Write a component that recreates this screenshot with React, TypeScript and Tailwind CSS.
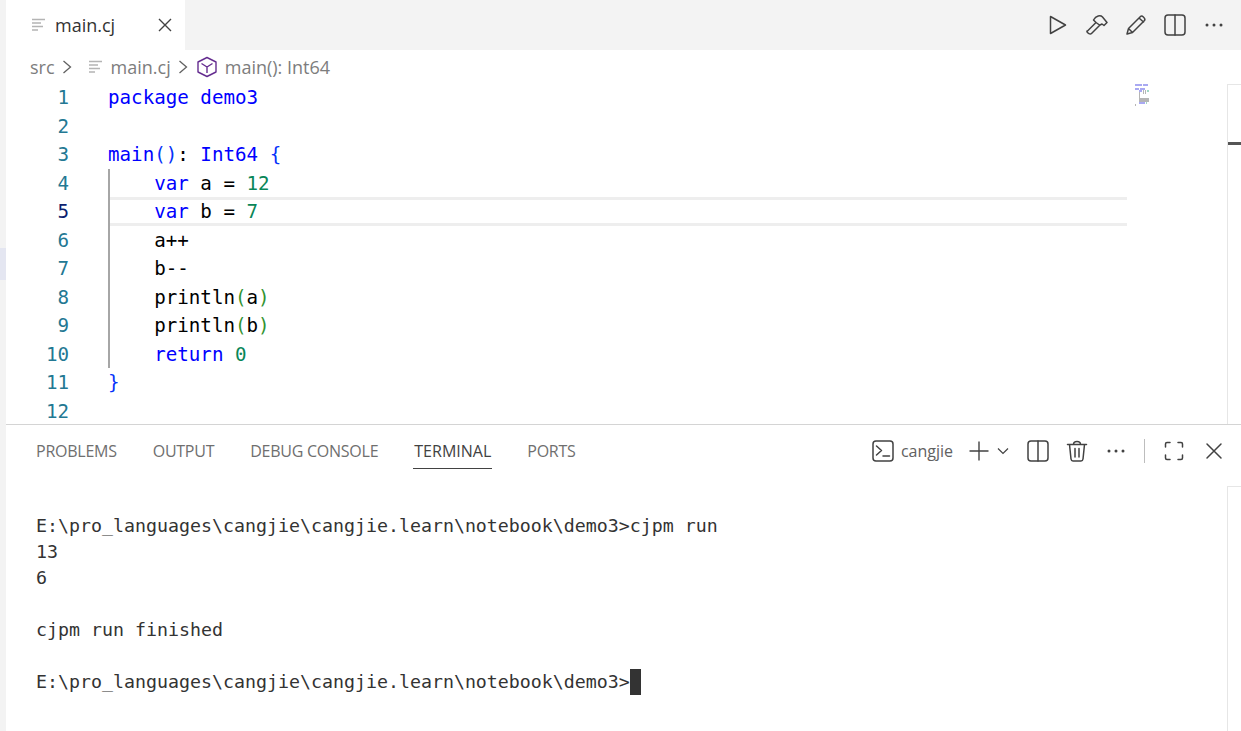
import React from "react";

const mono = "font-['DejaVu_Sans_Mono',monospace]";
const ui = "font-['Open_Sans',sans-serif]";

const K = ({ children }: { children: React.ReactNode }) => <span className="text-[#0000ff]">{children}</span>;
const N = ({ children }: { children: React.ReactNode }) => <span className="text-[#098658]">{children}</span>;
const G = ({ children }: { children: React.ReactNode }) => <span className="text-[#319331]">{children}</span>;
const B = ({ children }: { children: React.ReactNode }) => <span className="text-[#0431fa]">{children}</span>;

const codeLines: React.ReactNode[] = [
  <><K>package</K> <K>demo3</K></>,
  "",
  <><K>main</K><B>()</B>: <K>Int64</K> <B>{"{"}</B></>,
  <>    <K>var</K> a = <N>12</N></>,
  <>    <K>var</K> b = <N>7</N></>,
  <>    a++</>,
  <>    b--</>,
  <>    println<G>(</G>a<G>)</G></>,
  <>    println<G>(</G>b<G>)</G></>,
  <>    <K>return</K> <N>0</N></>,
  <B>{"}"}</B>,
  "",
];

const FileLines = () => (
  <svg width="14" height="16" viewBox="0 0 14 16" fill="none" stroke="#b4b4b4" strokeWidth="1.4">
    <path d="M0 2.5h13M0 6h9M0 9.5h11M0 13h6" />
  </svg>
);

const Chevron = () => (
  <svg width="10" height="16" viewBox="0 0 10 16" fill="none" stroke="#616161" strokeWidth="1.3">
    <path d="M1.5 2l7 6-7 6" />
  </svg>
);

const Ico = ({ children, w = 22 }: { children: React.ReactNode; w?: number }) => (
  <svg width={w} height={22} viewBox="0 0 22 22" fill="none" stroke="#424242" strokeWidth="1.5" strokeLinejoin="round" strokeLinecap="round">
    {children}
  </svg>
);

const Dots = () => (
  <Ico>
    <g fill="#424242" stroke="none">
      <circle cx="4" cy="11" r="1.5" />
      <circle cx="11" cy="11" r="1.5" />
      <circle cx="18" cy="11" r="1.5" />
    </g>
  </Ico>
);

const Split = () => (
  <Ico>
    <rect x="1" y="1" width="20" height="20" rx="3" />
    <path d="M11 1v20" />
  </Ico>
);

const Minimap = () => (
  <svg width="16" height="22" viewBox="0 0 16 22" shapeRendering="crispEdges">
    <g fill="#a9a9f2">
      <rect x="1" y="0" width="7" height="2" />
      <rect x="9" y="0" width="5" height="2" />
      <rect x="1" y="4" width="4" height="2" />
      <rect x="6" y="4" width="5" height="2" />
      <rect x="5" y="6" width="3" height="2" />
      <rect x="5" y="18" width="6" height="2" />
    </g>
    <g fill="#b5b5b5">
      <rect x="9" y="6" width="1" height="4" />
      <rect x="11" y="6" width="1" height="4" />
      <rect x="5" y="8" width="1" height="6" />
      <rect x="5" y="14" width="10" height="4" />
      <rect x="1" y="20" width="1" height="2" />
    </g>
    <rect x="13" y="6" width="2" height="2" fill="#9fd8c5" />
    <rect x="12" y="18" width="1" height="2" fill="#9fd8c5" />
  </svg>
);

const PanelTab = ({ label, active }: { label: string; active?: boolean }) => (
  <div className={`relative flex h-full items-center text-[16px] ${active ? "tracking-[0px] text-[#424242]" : "tracking-[-0.25px] text-[#6f6f6f]"}`}>
    {label}
    {active && <div className="absolute -left-px -right-px bottom-[8px] h-px bg-[#424242]" />}
  </div>
);

export default function App() {
  return (
    <div className={`flex h-[731px] w-[1241px] overflow-hidden bg-white ${ui}`}>
      <div className="flex w-[6px] shrink-0 flex-col bg-[#f3f3f3]">
        <div className="mt-[248px] h-[32px] bg-[#e4e6f1]" />
      </div>
      <div className="flex min-w-0 flex-1 flex-col">
        {/* tab bar */}
        <div className="flex h-[50px] shrink-0 bg-[#f3f3f3]">
          <div className="flex w-[179px] items-center bg-white pl-[26px]">
            <FileLines />
            <span className="ml-[9px] text-[18px] text-[#333333]">main.cj</span>
            <svg className="ml-[42px]" width="16" height="16" viewBox="0 0 16 16" fill="none" stroke="#424242" strokeWidth="1.4">
              <path d="M2 2l12 12M14 2L2 14" />
            </svg>
          </div>
          <div className="flex flex-1 items-center justify-end gap-[17px] pr-[16px]">
            <Ico>
              <path d="M3.500 2.500v17l15-8.500z" />
            </Ico>
            <Ico>
              <path d="M1 17.500L10 8.500 7.500 6C10 1.500 14.500 1 16.500 3l4.500 5.500-3 3-2-1.500-2 1-8.500 8.500c-1.500 1.500-5 -1-4.500-2.500zM10 8.500l3.500 2.500" />
            </Ico>
            <Ico>
              <path d="M2 20l1.500-5.500L15.500 2.500c1.500-1.500 5.500 2 4 4L7.500 18.500zM3.500 14.500l4 4M14 4l4.500 4" />
            </Ico>
            <Split />
            <Dots />
          </div>
        </div>

        {/* breadcrumb */}
        <div className="flex h-[34px] shrink-0 items-center pl-[24px] text-[18px] text-[#7d7d7d]">
          <span>src</span>
          <span className="ml-[7px]"><Chevron /></span>
          <span className="ml-[17px]"><FileLines /></span>
          <span className="ml-[8px]">main.cj</span>
          <span className="ml-[7px]"><Chevron /></span>
          <svg className="ml-[8px]" width="22" height="22" viewBox="0 0 22 22" fill="none" stroke="#652d90" strokeWidth="1.4" strokeLinejoin="round">
            <path d="M11 1.500l9 4.500v10l-9 4.500-9-4.500V6zM5.500 7.500L11 11l5.500-3.500M11 11v6" />
          </svg>
          <span className="ml-[7px]">main(): Int64</span>
        </div>

        {/* editor */}
        <div className="relative flex h-[340px] shrink-0 overflow-hidden">
          <div className={`w-[63px] shrink-0 text-right text-[19.18px] leading-[28.5px] text-[#237893] ${mono}`}>
            {codeLines.map((_, i) => (
              <div key={i} className={i === 4 ? "text-[#0b216f]" : ""}>{i + 1}</div>
            ))}
          </div>
          <div className={`ml-[39px] text-[19.18px] leading-[28.5px] whitespace-pre text-black ${mono}`}>
            {codeLines.map((line, i) => (
              <div key={i} className="h-[28.5px]">{line}</div>
            ))}
          </div>
          {/* indent guide */}
          <div className="absolute left-[102px] top-[85px] h-[199px] w-[2px] bg-[#a6a6a6]" />
          {/* current line */}
          <div className="absolute left-[104px] top-[113px] h-[29px] w-[1017px] border-y-[3px] border-[#eeeeee]" />
          {/* minimap */}
          <div className="absolute left-[1128px] top-0">
            <Minimap />
          </div>
          {/* scrollbar */}
          <div className="absolute right-0 top-0 bottom-0 w-[14px] border-l border-t border-[#e6e6e6]">
            <div className="mt-[57px] h-[3px] bg-[#555555]" />
          </div>
        </div>

        {/* panel */}
        <div className="flex min-h-0 flex-1 flex-col border-t border-[#d4d4d4]">
          <div className="flex h-[52px] shrink-0 items-center justify-between pl-[30px] pr-[16px]">
            <div className="flex h-full items-center gap-[36px]">
              <PanelTab label="PROBLEMS" />
              <PanelTab label="OUTPUT" />
              <PanelTab label="DEBUG CONSOLE" />
              <PanelTab label="TERMINAL" active />
              <PanelTab label="PORTS" />
            </div>
            <div className="flex items-center">
              <Ico>
                <rect x="1" y="1" width="20" height="20" rx="3" />
                <path d="M4.500 6l5 4.500-5 4.500M11 16h6.500" />
              </Ico>
              <span className="ml-[7px] text-[16px] text-[#616161]">cangjie</span>
              <svg className="ml-[15px]" width="22" height="22" viewBox="0 0 22 22" fill="none" stroke="#424242" strokeWidth="1.4">
                <path d="M11 1.500v19M1.500 11h19" />
              </svg>
              <svg className="ml-[7px]" width="12" height="12" viewBox="0 0 12 12" fill="none" stroke="#424242" strokeWidth="1.2">
                <path d="M1 3.500l5 5 5-5" />
              </svg>
              <span className="ml-[18px]"><Split /></span>
              <span className="ml-[17px]">
                <Ico>
                  <path d="M1.500 4.500h19M7.500 4.500c0-4 7-4 7 0M3.500 4.500l1.500 14.500c.2 1.500 1 2 2 2h8c1 0 1.800-.5 2-2l1.500-14.500M9 8.500v8.500M13 8.500v8.500" />
                </Ico>
              </span>
              <span className="ml-[17px]"><Dots /></span>
              <div className="ml-[17px] h-[24px] w-px bg-[#bdbdbd]" />
              <span className="ml-[18px]">
                <Ico>
                  <path d="M2.500 7V4c0-1 .5-1.500 1.500-1.500h3M15 2.500h3c1 0 1.500.5 1.500 1.500v3M19.500 15v3c0 1-.5 1.500-1.500 1.500h-3M7 19.500H4c-1 0-1.500-.5-1.500-1.500v-3" />
                </Ico>
              </span>
              <span className="ml-[18px]">
                <Ico>
                  <path d="M4 4l14 14M18 4L4 18" />
                </Ico>
              </span>
            </div>
          </div>
          <div className="relative min-h-0 flex-1">
            <div className={`pl-[30px] pt-[10px] text-[18.27px] leading-[26px] whitespace-pre text-[#333333] ${mono}`}>
              <div className="h-[26px]" />
              <div>E:\pro_languages\cangjie\cangjie.learn\notebook\demo3&gt;cjpm run</div>
              <div>13</div>
              <div>6</div>
              <div className="h-[26px]" />
              <div>cjpm run finished</div>
              <div className="h-[26px]" />
              <div className="flex items-center">
                E:\pro_languages\cangjie\cangjie.learn\notebook\demo3&gt;
                <span className="h-[26px] w-[11px] bg-[#333333]" />
              </div>
            </div>
            <div className="absolute right-0 top-[9px] bottom-0 w-[14px] border-l border-t border-[#e6e6e6]" />
          </div>
        </div>
      </div>
    </div>
  );
}
